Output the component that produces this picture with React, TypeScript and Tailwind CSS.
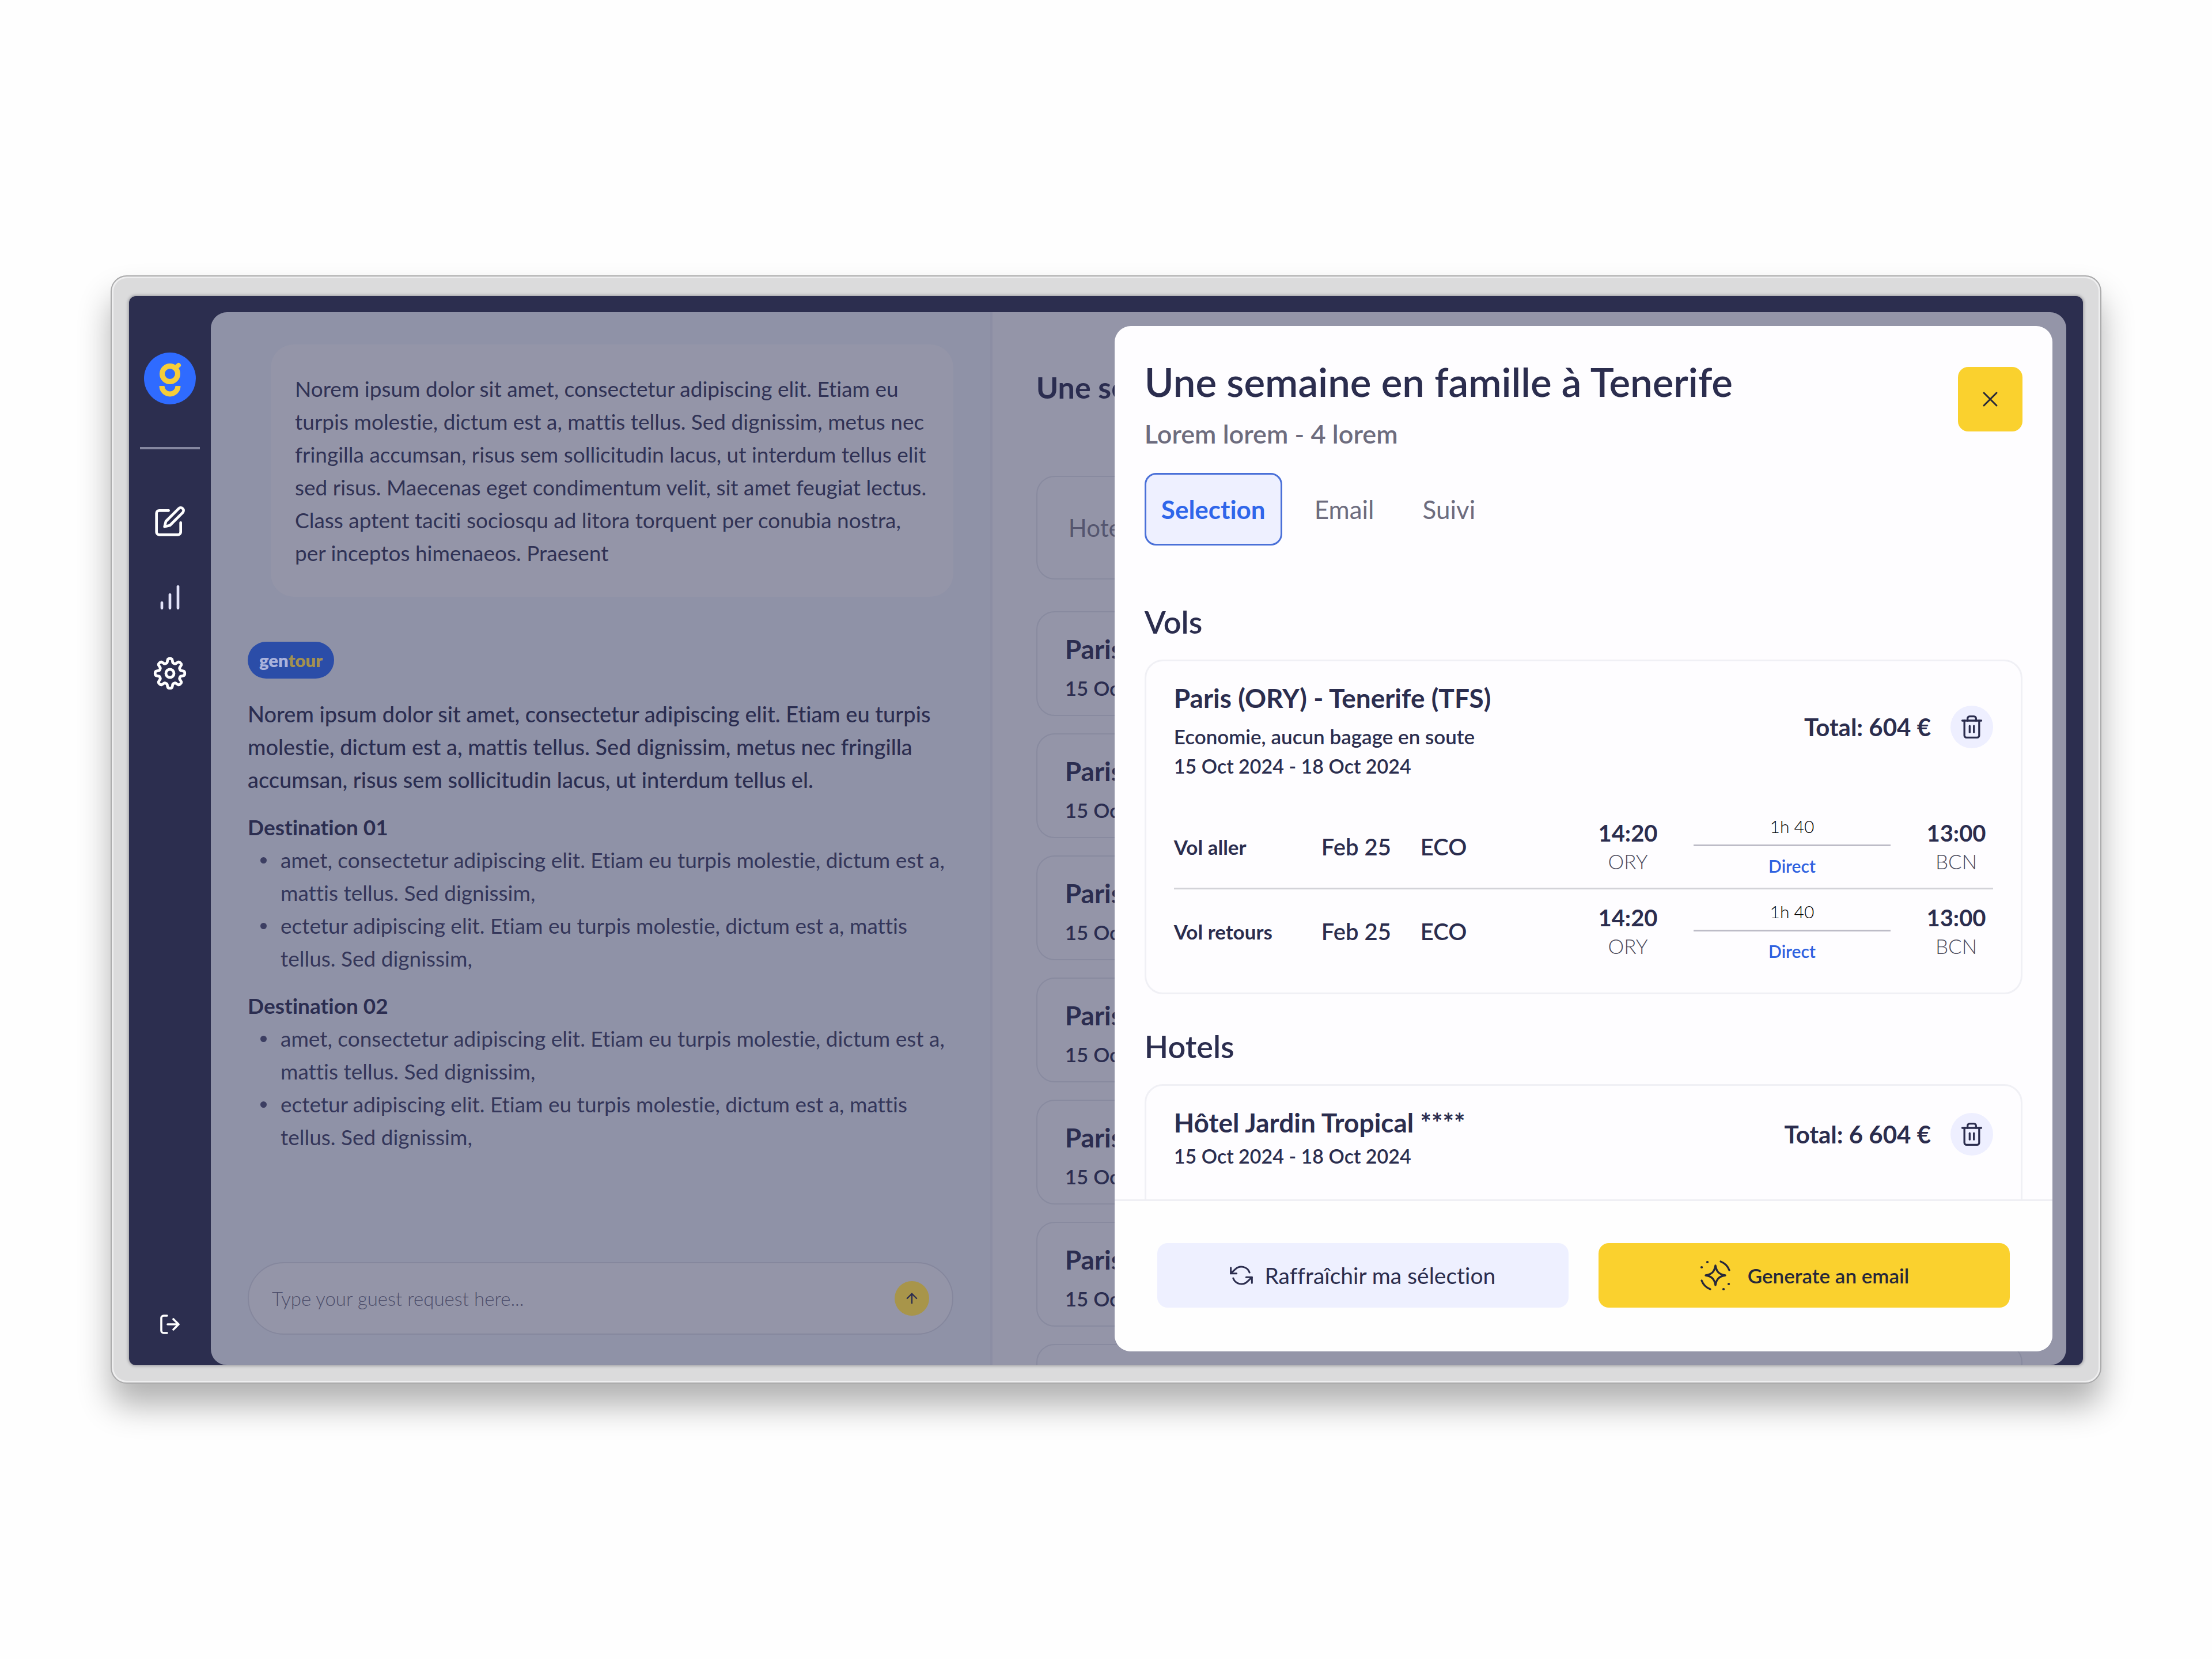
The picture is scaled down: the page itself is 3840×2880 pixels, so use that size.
import { FiBarChart, FiEdit, FiRefreshCcw, FiTrash2, FiX, FiArrowUp } from 'react-icons/fi';
import type { ReactNode } from 'react';

interface Destination {
  name: string;
  items: string[];
}

interface Leg {
  label: string;
  date: string;
  cabin: string;
  from: { time: string; code: string };
  to: { time: string; code: string };
  duration: string;
}

const BULLETS = [
  'amet, consectetur adipiscing elit. Etiam eu turpis molestie, dictum est a, mattis tellus. Sed dignissim,',
  'ectetur adipiscing elit. Etiam eu turpis molestie, dictum est a, mattis tellus. Sed dignissim,',
];

const DESTINATIONS: Destination[] = [
  { name: 'Destination 01', items: BULLETS },
  { name: 'Destination 02', items: BULLETS },
];

const LEGS: Leg[] = [
  { label: 'Vol aller', date: 'Feb 25', cabin: 'ECO', from: { time: '14:20', code: 'ORY' }, to: { time: '13:00', code: 'BCN' }, duration: '1h 40' },
  { label: 'Vol retours', date: 'Feb 25', cabin: 'ECO', from: { time: '14:20', code: 'ORY' }, to: { time: '13:00', code: 'BCN' }, duration: '1h 40' },
];

const TABS = ['Selection', 'Email', 'Suivi'];
const RESULTS = [1, 2, 3, 4, 5, 6, 7];

// eight rounded lobes around the centre
const GEAR_PATH = Array.from({ length: 128 }, (_, i) => {
  const a = (i / 128) * Math.PI * 2;
  const r = 22.2 + 3.6 * Math.tanh(2.2 * Math.cos(8 * a));
  return `${i === 0 ? 'M' : 'L'}${(30 + r * Math.sin(a)).toFixed(2)} ${(30 - r * Math.cos(a)).toFixed(2)}`;
}).join('') + 'Z';

function LogoMark() {
  return (
    <svg viewBox="0 0 90 90" className="h-[90px] w-[90px]" fill="none">
      <circle cx="45" cy="45" r="45" fill="#2f6bff" />
      <circle cx="45" cy="37" r="13.5" stroke="#f5cd3a" strokeWidth="9" />
      <path d="M54 27l6-5" stroke="#f5cd3a" strokeWidth="8" strokeLinecap="round" />
      <path d="M31 58a14 14 0 0 0 28 0" stroke="#f5cd3a" strokeWidth="9" />
    </svg>
  );
}

function GearIcon() {
  return (
    <svg viewBox="0 0 60 60" className="h-[60px] w-[60px]" fill="none" stroke="currentColor" strokeWidth="4.8" strokeLinejoin="round">
      <path d={GEAR_PATH} />
      <circle cx="30" cy="30" r="7" />
    </svg>
  );
}

function LogoutIcon() {
  return (
    <svg viewBox="0 0 34 34" className="h-[34px] w-[34px]" fill="none" stroke="currentColor" strokeWidth="3.6" strokeLinecap="round" strokeLinejoin="round">
      <path d="M12 2H6a4 4 0 0 0-4 4v22a4 4 0 0 0 4 4h6" />
      <path d="M13 17h19M23 8l9 9-9 9" />
    </svg>
  );
}

function SparkIcon() {
  return (
    <svg viewBox="-28 -28 56 56" className="h-14 w-14" fill="none" stroke="currentColor" strokeWidth="3.4" strokeLinecap="round" strokeLinejoin="round">
      <path d="M0-17C2-6 6-2 17 0C6 2 2 6 0 17C-2 6-6 2-17 0C-6-2-2-6 0-17Z" />
      <path d="M9-24A26 26 0 0 1 24-9M-24 9A26 26 0 0 0-9 24" />
      <path d="M-14-23h.1M-24-14h.1M23 15h.1M14 24h.1" strokeWidth="4.2" />
    </svg>
  );
}

function Sidebar() {
  return (
    <nav className="flex w-[142px] shrink-0 flex-col items-center pt-[98px] pb-[54px] text-white">
      <a href="#" aria-label="Home"><LogoMark /></a>
      <hr className="mt-[74px] w-[104px] border-t-4 border-[#8587a0]" />
      <div className="mt-[95px] flex flex-col items-center gap-[72px]">
        <a href="#" aria-label="New request" className="flex h-[60px] items-center"><FiEdit size={56} /></a>
        <a href="#" aria-label="Statistics" className="flex h-[60px] items-center text-[#e3e4fa]"><FiBarChart size={56} /></a>
        <a href="#" aria-label="Settings" className="flex h-[60px] items-center"><GearIcon /></a>
      </div>
      <button type="button" aria-label="Log out" className="mt-auto"><LogoutIcon /></button>
    </nav>
  );
}

function Chat() {
  return (
    <section className="flex w-[42%] shrink-0 flex-col bg-[#8f92a7] px-16 pt-14 pb-[53px] text-[37px] leading-[57px] text-[#2b2d50]">
      <div className="ml-10 rounded-[40px] bg-[#9495a8] px-[42px] pt-12 pb-12 text-[#303255]">
        Norem ipsum dolor sit amet, consectetur adipiscing elit. Etiam eu turpis molestie, dictum est a, mattis tellus.
        Sed dignissim, metus nec fringilla accumsan, risus sem sollicitudin lacus, ut interdum tellus elit sed risus.
        Maecenas eget condimentum velit, sit amet feugiat lectus. Class aptent taciti sociosqu ad litora torquent per
        conubia nostra, per inceptos himenaeos. Praesent
      </div>
      <div className="mt-[78px] flex h-16 w-[150px] items-center justify-center rounded-full bg-[#2b4da8] text-[31px] font-extrabold text-[#aab3dc]">
        gen<span className="text-[#a3914f]">tour</span>
      </div>
      <p className="mt-[33px] text-[38px] font-medium">
        Norem ipsum dolor sit amet, consectetur adipiscing elit. Etiam eu turpis molestie, dictum est a, mattis tellus.
        Sed dignissim, metus nec fringilla accumsan, risus sem sollicitudin lacus, ut interdum tellus el.
      </p>
      {DESTINATIONS.map((d) => (
        <div key={d.name} className="mt-[25px]">
          <h3 className="font-bold">{d.name}</h3>
          <ul className="text-[#34365a]">
            {d.items.map((item) => (
              <li key={item} className="flex">
                <span className="mt-6 mr-6 ml-[22px] h-[11px] w-[11px] shrink-0 rounded-full bg-[#3c3e62]" />
                {item}
              </li>
            ))}
          </ul>
        </div>
      ))}
      <form className="mt-auto flex h-[126px] items-center rounded-full border-2 border-[#85879d] bg-[#9495a8] px-10">
        <label htmlFor="request" className="sr-only">Guest request</label>
        <input
          id="request"
          placeholder="Type your guest request here..."
          className="h-20 min-w-0 flex-1 bg-transparent text-[33px] font-light outline-none placeholder:text-[#4d4e6b]"
        />
        <button type="button" aria-label="Send" className="flex h-[60px] w-[60px] items-center justify-center rounded-full bg-[#a8954a]">
          <FiArrowUp size={28} />
        </button>
      </form>
    </section>
  );
}

function Results() {
  return (
    <section className="min-w-0 flex-1 border-l-4 border-[#8c8ea4] bg-[#9495a8] px-19 pt-[100px] text-[#2b2d50]">
      <h2 className="text-[52px] leading-[60px] font-bold">Une semaine en famille à Tenerife</h2>
      <div className="mt-[124px] rounded-[32px] border-2 border-[#888a9f] px-[54px] py-[58px] text-[42px] leading-[60px] text-[#55566f]">Hotels</div>
      <ul className="mt-[55px] flex flex-col gap-[30px]">
        {RESULTS.map((n) => (
          <li key={n} className="rounded-[32px] border-2 border-[#888a9f] px-12 pt-9 pb-[22px]">
            <div className="text-[46px] leading-[56px] font-bold">Paris (ORY) - Tenerife (TFS)</div>
            <div className="mt-[14px] text-[35px] leading-[50px] font-semibold">15 Oct 2024 - 18 Oct 2024</div>
          </li>
        ))}
      </ul>
    </section>
  );
}

function TotalPrice({ amount }: { amount: string }) {
  return (
    <div className="flex shrink-0 items-center gap-[34px] pb-4">
      <span className="text-[42px] leading-[50px] font-bold">Total: {amount}</span>
      <button type="button" aria-label="Remove" className="flex h-[74px] w-[74px] items-center justify-center rounded-full bg-[#eeefff]">
        <FiTrash2 size={44} strokeWidth={1.8} />
      </button>
    </div>
  );
}

function Stop({ time, code }: { time: string; code: string }) {
  return (
    <div className="w-32 text-center">
      <div className="text-[40px] leading-[50px] font-bold">{time}</div>
      <div className="text-[35px] leading-[48px] font-light text-[#4c4b5c]">{code}</div>
    </div>
  );
}

function LegRow({ leg }: { leg: Leg }) {
  return (
    <div className="flex h-[146px] items-center text-[40px] leading-[50px] font-semibold">
      <span className="w-64 text-[35px] font-bold">{leg.label}</span>
      <span className="w-[172px]">{leg.date}</span>
      <span className="flex-1">{leg.cabin}</span>
      <div className="flex items-center gap-[50px]">
        <Stop {...leg.from} />
        <div className="w-[342px] text-center text-[30px]">
          <div className="border-b-3 border-[#bdbcc7] leading-[64px] font-light text-black">{leg.duration}</div>
          <div className="leading-[68px] text-[#2f62e0]">Direct</div>
        </div>
        <Stop {...leg.to} />
      </div>
    </div>
  );
}

function Card({ children }: { children: ReactNode }) {
  return <div className="rounded-[32px] border-3 border-[#f0f0f5] px-12">{children}</div>;
}

function SelectionPanel() {
  return (
    <aside className="absolute top-[52px] right-[53px] bottom-6 flex w-[48%] flex-col overflow-hidden rounded-[28px] bg-[#fefdff] text-[#2b2d4e]">
      <div className="min-h-0 flex-1 overflow-hidden px-[52px] pt-[55px]">
        <header className="flex items-start justify-between">
          <div>
            <h1 className="text-[69px] leading-[84px] font-semibold">Une semaine en famille à Tenerife</h1>
            <p className="mt-5 text-[45px] leading-[56px] font-semibold text-[#6d6c7e]">Lorem lorem - 4 lorem</p>
          </div>
          <button type="button" aria-label="Close" className="mt-4 flex h-28 w-28 items-center justify-center rounded-[18px] bg-[#fad12e] text-[#26283a]">
            <FiX size={44} strokeWidth={1.6} />
          </button>
        </header>

        <div role="tablist" className="mt-10 flex gap-7 text-[44px] leading-[60px]">
          {TABS.map((tab, i) => (
            <button
              key={tab}
              type="button"
              role="tab"
              aria-selected={i === 0}
              className={
                i === 0
                  ? 'h-[126px] rounded-[20px] border-3 border-[#4a70d8] bg-[#eef0ff] px-[26px] font-bold text-[#2f66ea]'
                  : 'h-[126px] px-7 text-[#6d6c7e]'
              }
            >
              {tab}
            </button>
          ))}
        </div>

        <h2 className="mt-[100px] text-[54px] leading-[66px] font-semibold">Vols</h2>
        <div className="mt-8">
          <Card>
            <div className="flex items-center justify-between pt-9">
              <div>
                <h3 className="text-[46px] leading-[56px] font-bold">Paris (ORY) - Tenerife (TFS)</h3>
                <p className="mt-3 text-[35px] leading-[52px] font-semibold">Economie, aucun bagage en soute</p>
                <p className="text-[34px] leading-[52px] font-semibold">15 Oct 2024 - 18 Oct 2024</p>
              </div>
              <TotalPrice amount="604 €" />
            </div>
            <div className="mt-[42px] mb-[33px] divide-y-3 divide-[#d3d3d8]">
              {LEGS.map((leg) => (
                <LegRow key={leg.label} leg={leg} />
              ))}
            </div>
          </Card>
        </div>

        <h2 className="mt-[58px] text-[54px] leading-[66px] font-semibold">Hotels</h2>
        <div className="mt-8">
          <Card>
            <div className="flex items-center justify-between pt-9 pb-20">
              <div>
                <h3 className="text-[46px] leading-[56px] font-bold">Hôtel Jardin Tropical ****</h3>
                <p className="mt-1 text-[34px] leading-[52px] font-semibold">15 Oct 2024 - 18 Oct 2024</p>
              </div>
              <TotalPrice amount="6 604 €" />
            </div>
          </Card>
        </div>
      </div>

      <footer className="flex gap-[52px] border-t-3 border-[#efeff4] bg-[#fefefe] px-[74px] pt-[73px] pb-[76px]">
        <button type="button" className="flex h-28 flex-1 items-center justify-center gap-5 rounded-[18px] bg-[#eef0ff] text-[39px] leading-[50px]">
          <FiRefreshCcw size={40} strokeWidth={1.8} />
          Raffraîchir ma sélection
        </button>
        <button type="button" className="flex h-28 flex-1 items-center justify-center gap-7 rounded-[18px] bg-[#fad12e] text-[35px] leading-[50px] font-semibold text-[#26283a]">
          <SparkIcon />
          Generate an email
        </button>
      </footer>
    </aside>
  );
}

export default function App() {
  return (
    <div className="flex min-h-screen items-center bg-[#fefefe] px-48 font-['Lato',sans-serif] [font-variant-ligatures:none]">
      <div className="w-full rounded-[28px] border-2 border-[#a9a9aa] bg-[#dbdbdc] px-[30px] pt-[34px] pb-[30px] shadow-[0_38px_56px_rgba(0,0,0,0.3),inset_0_0_0_3px_#eeeeef]">
        <div className="relative flex aspect-[53/29] overflow-hidden rounded-[12px] bg-[#2c2e4f] shadow-[0_0_4px_2px_#a8a8ac]">
          <Sidebar />
          <main className="mt-7 mr-[29px] flex min-w-0 flex-1 overflow-hidden rounded-[28px]">
            <Chat />
            <Results />
          </main>
          <SelectionPanel />
        </div>
      </div>
    </div>
  );
}
